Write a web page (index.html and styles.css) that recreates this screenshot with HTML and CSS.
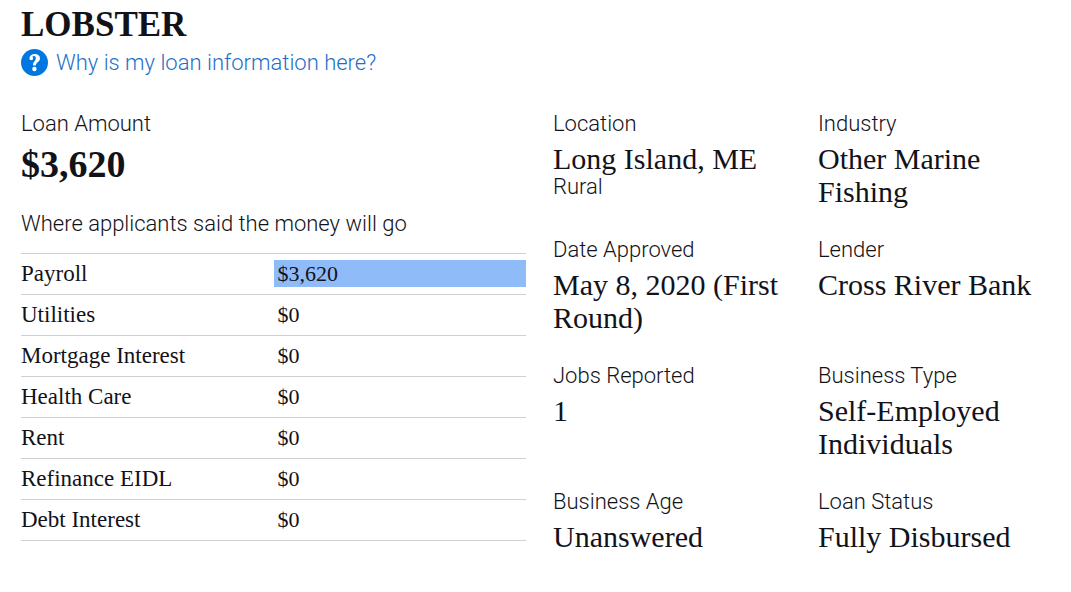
FILE: index.html
```
<!DOCTYPE html>
<html lang="en">
<head>
<meta charset="utf-8">
<meta name="viewport" content="width=device-width, initial-scale=1">
<title>Lobster</title>
<link rel="stylesheet" href="styles.css">
</head>
<body>
<main class="loan">
  <header class="heading">
    <h1 class="title">LOBSTER</h1>
    <a class="help" href="#">
      <svg class="help-icon" viewBox="0 0 27 27" aria-hidden="true">
        <circle cx="13.5" cy="13.5" r="13.5" fill="#0077e0"/>
        <path d="M8.4 9.6C8.6 6.6 10.7 5 13.8 5C17 5 19 6.7 19 9.4C19 12.5 15.2 13 14.8 16.4H12C11.8 12.8 14.8 12.1 14.8 9.3C14.8 7.9 14.1 7.1 13 7.1C12.2 7.1 11.6 7.5 11.3 8.1C12 8.4 12.2 9 12.1 9.7C11.7 11.7 8.5 11.6 8.4 9.6Z" fill="#fff"/>
        <circle cx="13.4" cy="20" r="2.2" fill="#fff"/>
      </svg>
      <span>Why is my loan information here?</span>
    </a>
  </header>
  <div class="columns">
    <section class="spending">
      <h2 class="label">Loan Amount</h2>
      <p class="amount">$3,620</p>
      <table class="uses">
        <caption class="caption">Where applicants said the money will go</caption>
        <tbody>
          <tr><th scope="row">Payroll</th><td><span class="bar full">$3,620</span></td></tr>
          <tr><th scope="row">Utilities</th><td><span class="bar">$0</span></td></tr>
          <tr><th scope="row">Mortgage Interest</th><td><span class="bar">$0</span></td></tr>
          <tr><th scope="row">Health Care</th><td><span class="bar">$0</span></td></tr>
          <tr><th scope="row">Rent</th><td><span class="bar">$0</span></td></tr>
          <tr><th scope="row">Refinance EIDL</th><td><span class="bar">$0</span></td></tr>
          <tr><th scope="row">Debt Interest</th><td><span class="bar">$0</span></td></tr>
        </tbody>
      </table>
    </section>
    <dl class="facts">
      <div class="fact"><dt class="label">Location</dt><dd class="value">Long Island, ME</dd><dd class="note">Rural</dd></div>
      <div class="fact"><dt class="label">Industry</dt><dd class="value">Other Marine Fishing</dd></div>
      <div class="fact"><dt class="label">Date Approved</dt><dd class="value">May 8, 2020 (First Round)</dd></div>
      <div class="fact"><dt class="label">Lender</dt><dd class="value">Cross River Bank</dd></div>
      <div class="fact"><dt class="label">Jobs Reported</dt><dd class="value">1</dd></div>
      <div class="fact"><dt class="label">Business Type</dt><dd class="value">Self-Employed Individuals</dd></div>
      <div class="fact"><dt class="label">Business Age</dt><dd class="value">Unanswered</dd></div>
      <div class="fact"><dt class="label">Loan Status</dt><dd class="value">Fully Disbursed</dd></div>
    </dl>
  </div>
</main>
</body>
</html>
```
FILE: styles.css
```
* { box-sizing: border-box; }
body {
  margin: 0;
  background: #fff;
  color: #121219;
  font-family: Roboto, sans-serif;
  font-size: 22px;
  line-height: 24px;
}
h1, h2, p, dl, dd { margin: 0; }
.loan { padding: 5px 16px 0 21px; }
.title {
  font: 700 35px/40px "Liberation Serif", serif;
}
.help {
  display: flex;
  align-items: center;
  gap: 8px;
  width: fit-content;
  margin-top: 4px;
  color: #1f6fc6;
  font-weight: 300;
  line-height: 26px;
  text-decoration: none;
}
.help-icon { width: 27px; height: 27px; }
.columns {
  display: grid;
  grid-template-columns: 505fr 502fr;
  gap: 27px;
  margin-top: 36px;
}
.label, .caption, .note {
  font-family: Roboto, sans-serif;
  font-size: 22px;
  font-weight: 300;
  line-height: 24px;
}
.amount {
  margin-top: 8px;
  font: 700 38px/40px "Liberation Serif", serif;
}
.uses {
  width: 100%;
  margin-top: 28px;
  border-collapse: collapse;
  table-layout: fixed;
  font-family: "Liberation Serif", serif;
  font-size: 23px;
  line-height: 27px;
}
.caption { padding-bottom: 17px; text-align: left; }
.uses tr { border-top: 1px solid #d0d0d0; border-bottom: 1px solid #d0d0d0; }
.uses th, .uses td { padding: 6px 0 7px; font-weight: 400; text-align: left; }
.uses td { font-size: 22px; }
.bar { display: block; padding-left: 4px; }
.full { background: #90bbf9; }
.facts {
  display: grid;
  grid-template-columns: repeat(2, minmax(0, 1fr));
  grid-auto-rows: minmax(96px, auto);
  align-content: start;
  gap: 30px 28px;
}
.value {
  margin-top: 6px;
  font-family: "Liberation Serif", serif;
  font-size: 30px;
  line-height: 33px;
}
```
